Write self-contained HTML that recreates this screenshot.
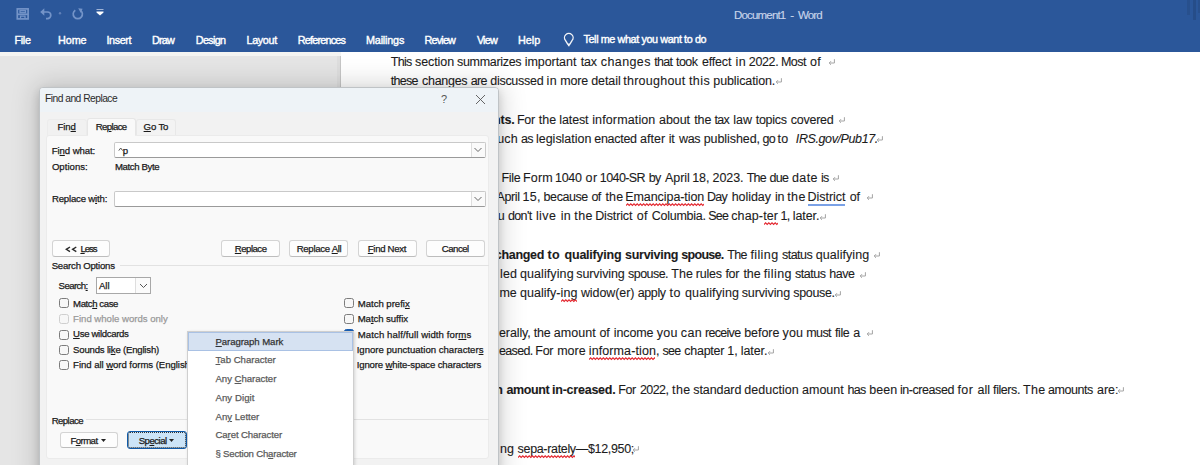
<!DOCTYPE html>
<html><head><meta charset="utf-8"><style>
*{margin:0;padding:0;box-sizing:border-box}
html,body{width:1200px;height:465px;overflow:hidden;background:#e5e5e5;font-family:"Liberation Sans",sans-serif}
.t{position:absolute;white-space:nowrap;-webkit-text-stroke:0.25px currentColor}
.abs{position:absolute}
#ribbon{position:absolute;left:0;top:0;width:1200px;height:52px;background:#2b579a}
#page{position:absolute;left:341px;top:52px;width:859px;height:413px;background:#fff}
.retw{position:absolute;width:8px;height:7px}
.ret{display:block}
.sq{}
.bl{border-bottom:2px solid #7aa1e6;padding-bottom:0px}
#dlg{position:absolute;left:38.5px;top:86.5px;width:460px;height:400px;background:#f2f2f2;border:1px solid #bfc3c6;border-radius:4px;box-shadow:0 0 26px 3px rgba(0,0,0,0.17),0 4px 9px rgba(0,0,0,0.14)}
#dlgtitle{position:absolute;left:39.5px;top:87.5px;width:458px;height:24.5px;background:#eef3f7;border-radius:3px 3px 0 0}
#panel{position:absolute;left:46px;top:135px;width:443px;height:324px;background:#f9f9f9;border:1px solid #ebebeb;border-radius:3px}
.tab{position:absolute;background:#f3f3f3;border:1px solid #e8e8e8;border-bottom:none;border-radius:3px 3px 0 0}
.inp{position:absolute;background:#fff;border:1px solid #c9c9c9;border-bottom-color:#9a9a9a;border-radius:2px}
.ddb{position:absolute;top:0;right:0;width:14px;height:100%;border-left:1px solid #dedede;background:#fafafa}
.btn{position:absolute;background:#fdfdfd;border:1px solid #d4d4d4;border-bottom-color:#bdbdbd;border-radius:3px}
.cb{position:absolute;width:10px;height:10px;border:1px solid #7c7c7c;border-radius:2.5px;background:#f7f7f7}
.sep{position:absolute;height:1px;background:#e2e2e2}
#menu{position:absolute;left:187px;top:331px;width:167px;height:140px;background:#fff;border:1px solid #cfcfcf;box-shadow:1px 1px 3px rgba(0,0,0,0.15)}
#mhl{position:absolute;left:188px;top:332px;width:165px;height:19px;background:#d6e2f2;border:1px solid #a9c1e4}
u{text-decoration:underline;text-underline-offset:1px;text-decoration-thickness:1px}
</style></head><body>
<div id="ribbon"></div>
<svg class="abs" style="left:0;top:0" width="130" height="26">
 <g fill="none" stroke="#7494c8" stroke-width="1.7">
  <rect x="17.3" y="8.9" width="10.8" height="10"/>
  <path d="M17.5 14.3H28"/>
  <rect x="20" y="10.7" width="5.5" height="2" stroke-width="1.3"/>
  <path d="M20.5 18.5V16.2H25V18.5" stroke-width="1.3"/>
  <path d="M42 12H47.5A3.3 3.3 0 0 1 47.5 18.6H46"/>
  <path d="M75.3 10.2A4.6 4.6 0 1 0 80.3 10.2"/>
 </g>
 <path d="M44.3 8.3L40.2 12L44.3 15.7Z" fill="#7494c8"/>
 <path d="M78.2 8.3L82.6 8.8L80.8 13Z" fill="#7494c8"/>
 <circle cx="60" cy="13.2" r="1.2" fill="#5f80b8"/>
 <rect x="96.5" y="9" width="7" height="1" fill="#9fb3d6"/>
 <path d="M96.5 11.5H103.5V12.5L100 15.6L96.5 12.5Z" fill="#fff"/>
</svg>
<svg class="abs" style="left:561px;top:32px" width="14" height="16" viewBox="0 0 14 16"><path d="M4.6 8.6A4.3 4.3 0 1 1 11 8.6L8.9 12.2H6.7Z M6.9 13.6H8.7" fill="none" stroke="#f2f4f8" stroke-width="1.35" stroke-linejoin="round"/></svg>
<div class="abs" style="left:1186.5px;top:0;width:3px;height:15px;background:#28508d;filter:blur(0.6px)"></div>
<div class="abs" style="left:1192.5px;top:0;width:3px;height:20px;background:#264d89;filter:blur(0.6px)"></div>
<div class="abs" style="left:1197.5px;top:0;width:3px;height:13px;background:#28508d;filter:blur(0.6px)"></div>
<div class="t" id="rb_title" style="left:734.00px;top:10px;font-size:11.5px;line-height:11.5px;color:#c8d4ea;letter-spacing:-0.824px;-webkit-text-stroke:0.15px #c8d4ea;">Document1&nbsp;&nbsp;-&nbsp;&nbsp;Word</div>
<div class="t" id="rb_file" style="left:14.50px;top:35px;font-size:10.8px;line-height:10.8px;color:#ffffff;letter-spacing:-0.333px;-webkit-text-stroke:0.4px #fff;">File</div>
<div class="t" id="rb_home" style="left:58.10px;top:35px;font-size:10.8px;line-height:10.8px;color:#ffffff;letter-spacing:-0.133px;-webkit-text-stroke:0.4px #fff;">Home</div>
<div class="t" id="rb_insert" style="left:106.50px;top:35px;font-size:10.8px;line-height:10.8px;color:#ffffff;letter-spacing:-0.400px;-webkit-text-stroke:0.4px #fff;">Insert</div>
<div class="t" id="rb_draw" style="left:152.00px;top:35px;font-size:10.8px;line-height:10.8px;color:#ffffff;letter-spacing:-0.833px;-webkit-text-stroke:0.4px #fff;">Draw</div>
<div class="t" id="rb_design" style="left:195.75px;top:35px;font-size:10.8px;line-height:10.8px;color:#ffffff;letter-spacing:-0.650px;-webkit-text-stroke:0.4px #fff;">Design</div>
<div class="t" id="rb_layout" style="left:246.50px;top:35px;font-size:10.8px;line-height:10.8px;color:#ffffff;letter-spacing:-0.350px;-webkit-text-stroke:0.4px #fff;">Layout</div>
<div class="t" id="rb_refs" style="left:297.75px;top:35px;font-size:10.8px;line-height:10.8px;color:#ffffff;letter-spacing:-0.789px;-webkit-text-stroke:0.4px #fff;">References</div>
<div class="t" id="rb_mail" style="left:366.00px;top:35px;font-size:10.8px;line-height:10.8px;color:#ffffff;letter-spacing:-0.186px;-webkit-text-stroke:0.4px #fff;">Mailings</div>
<div class="t" id="rb_review" style="left:424.50px;top:35px;font-size:10.8px;line-height:10.8px;color:#ffffff;letter-spacing:-0.800px;-webkit-text-stroke:0.4px #fff;">Review</div>
<div class="t" id="rb_view" style="left:476.90px;top:35px;font-size:10.8px;line-height:10.8px;color:#ffffff;letter-spacing:-0.800px;-webkit-text-stroke:0.4px #fff;">View</div>
<div class="t" id="rb_help" style="left:518.00px;top:35px;font-size:10.8px;line-height:10.8px;color:#ffffff;-webkit-text-stroke:0.4px #fff;">Help</div>
<div class="t" id="rb_tell" style="left:583.50px;top:34px;font-size:10.8px;line-height:10.8px;color:#ffffff;letter-spacing:-0.392px;-webkit-text-stroke:0.4px #fff;">Tell me what you want to do</div>
<div id="page"></div>
<div class="abs" style="left:0;top:52px;width:341px;height:3.5px;background:#f4f4f2"></div>
<div class="abs" style="left:337px;top:55.5px;width:3px;height:411px;background:#dedede"></div>
<div class="abs" style="left:340px;top:55.5px;width:1px;height:411px;background:#c6c6c6"></div>
<div class="t" id="doc_l1_w0" style="left:390.80px;top:56px;font-size:12.5px;line-height:12.5px;color:#1c1c1c;letter-spacing:-0.700px;-webkit-text-stroke:0.1px currentColor;">This</div>
<div class="t" id="doc_l1_w1" style="left:415.00px;top:56px;font-size:12.5px;line-height:12.5px;color:#1c1c1c;letter-spacing:-0.083px;-webkit-text-stroke:0.1px currentColor;">section</div>
<div class="t" id="doc_l1_w2" style="left:457.00px;top:56px;font-size:12.5px;line-height:12.5px;color:#1c1c1c;letter-spacing:-0.311px;-webkit-text-stroke:0.1px currentColor;">summarizes</div>
<div class="t" id="doc_l1_w3" style="left:524.70px;top:56px;font-size:12.5px;line-height:12.5px;color:#1c1c1c;letter-spacing:-0.050px;-webkit-text-stroke:0.1px currentColor;">important</div>
<div class="t" id="doc_l1_w4" style="left:580.80px;top:56px;font-size:12.5px;line-height:12.5px;color:#1c1c1c;letter-spacing:-0.250px;-webkit-text-stroke:0.1px currentColor;">tax</div>
<div class="t" id="doc_l1_w5" style="left:600.80px;top:56px;font-size:12.5px;line-height:12.5px;color:#1c1c1c;letter-spacing:0.400px;-webkit-text-stroke:0.1px currentColor;">changes</div>
<div class="t" id="doc_l1_w6" style="left:654.20px;top:56px;font-size:12.5px;line-height:12.5px;color:#1c1c1c;letter-spacing:-0.700px;-webkit-text-stroke:0.1px currentColor;">that</div>
<div class="t" id="doc_l1_w7" style="left:676.00px;top:56px;font-size:12.5px;line-height:12.5px;color:#1c1c1c;letter-spacing:-0.533px;-webkit-text-stroke:0.1px currentColor;">took</div>
<div class="t" id="doc_l1_w8" style="left:701.90px;top:56px;font-size:12.5px;line-height:12.5px;color:#1c1c1c;letter-spacing:-0.160px;-webkit-text-stroke:0.1px currentColor;">effect</div>
<div class="t" id="doc_l1_w9" style="left:735.60px;top:56px;font-size:12.5px;line-height:12.5px;color:#1c1c1c;letter-spacing:0.400px;-webkit-text-stroke:0.1px currentColor;">in</div>
<div class="t" id="doc_l1_w10" style="left:748.80px;top:56px;font-size:12.5px;line-height:12.5px;color:#1c1c1c;letter-spacing:-0.350px;-webkit-text-stroke:0.1px currentColor;">2022.</div>
<div class="t" id="doc_l1_w11" style="left:780.90px;top:56px;font-size:12.5px;line-height:12.5px;color:#1c1c1c;letter-spacing:-0.467px;-webkit-text-stroke:0.1px currentColor;">Most</div>
<div class="t" id="doc_l1_w12" style="left:810.00px;top:56px;font-size:12.5px;line-height:12.5px;color:#1c1c1c;letter-spacing:0.400px;-webkit-text-stroke:0.1px currentColor;">of</div>
<div class="t" id="doc_l2_w0" style="left:390.80px;top:75px;font-size:12.5px;line-height:12.5px;color:#1c1c1c;letter-spacing:-0.700px;-webkit-text-stroke:0.1px currentColor;">these</div>
<div class="t" id="doc_l2_w1" style="left:422.00px;top:75px;font-size:12.5px;line-height:12.5px;color:#1c1c1c;letter-spacing:-0.283px;-webkit-text-stroke:0.1px currentColor;">changes</div>
<div class="t" id="doc_l2_w2" style="left:470.80px;top:75px;font-size:12.5px;line-height:12.5px;color:#1c1c1c;letter-spacing:-0.700px;-webkit-text-stroke:0.1px currentColor;">are</div>
<div class="t" id="doc_l2_w3" style="left:490.30px;top:75px;font-size:12.5px;line-height:12.5px;color:#1c1c1c;letter-spacing:-0.288px;-webkit-text-stroke:0.1px currentColor;">discussed</div>
<div class="t" id="doc_l2_w4" style="left:546.50px;top:75px;font-size:12.5px;line-height:12.5px;color:#1c1c1c;letter-spacing:0.400px;-webkit-text-stroke:0.1px currentColor;">in</div>
<div class="t" id="doc_l2_w5" style="left:560.20px;top:75px;font-size:12.5px;line-height:12.5px;color:#1c1c1c;letter-spacing:-0.150px;-webkit-text-stroke:0.1px currentColor;">more</div>
<div class="t" id="doc_l2_w6" style="left:591.25px;top:75px;font-size:12.5px;line-height:12.5px;color:#1c1c1c;letter-spacing:-0.090px;-webkit-text-stroke:0.1px currentColor;">detail</div>
<div class="t" id="doc_l2_w7" style="left:623.30px;top:75px;font-size:12.5px;line-height:12.5px;color:#1c1c1c;letter-spacing:0.244px;-webkit-text-stroke:0.1px currentColor;">throughout</div>
<div class="t" id="doc_l2_w8" style="left:689.00px;top:75px;font-size:12.5px;line-height:12.5px;color:#1c1c1c;letter-spacing:0.400px;-webkit-text-stroke:0.1px currentColor;">this</div>
<div class="t" id="doc_l2_w9" style="left:713.30px;top:75px;font-size:12.5px;line-height:12.5px;color:#1c1c1c;letter-spacing:-0.109px;-webkit-text-stroke:0.1px currentColor;">publication.</div>
<div class="t" id="doc_l3_w0" style="left:493.00px;top:114px;font-size:12.5px;line-height:12.5px;color:#1c1c1c;font-weight:bold;letter-spacing:-0.200px;-webkit-text-stroke:0.1px currentColor;">nts.</div>
<div class="t" id="doc_l3_w1" style="left:516.90px;top:114px;font-size:12.5px;line-height:12.5px;color:#1c1c1c;letter-spacing:-0.300px;-webkit-text-stroke:0.1px currentColor;">For</div>
<div class="t" id="doc_l3_w2" style="left:538.80px;top:114px;font-size:12.5px;line-height:12.5px;color:#1c1c1c;-webkit-text-stroke:0.1px currentColor;">the</div>
<div class="t" id="doc_l3_w3" style="left:559.30px;top:114px;font-size:12.5px;line-height:12.5px;color:#1c1c1c;letter-spacing:-0.120px;-webkit-text-stroke:0.1px currentColor;">latest</div>
<div class="t" id="doc_l3_w4" style="left:592.20px;top:114px;font-size:12.5px;line-height:12.5px;color:#1c1c1c;letter-spacing:0.130px;-webkit-text-stroke:0.1px currentColor;">information</div>
<div class="t" id="doc_l3_w5" style="left:659.00px;top:114px;font-size:12.5px;line-height:12.5px;color:#1c1c1c;letter-spacing:-0.075px;-webkit-text-stroke:0.1px currentColor;">about</div>
<div class="t" id="doc_l3_w6" style="left:694.20px;top:114px;font-size:12.5px;line-height:12.5px;color:#1c1c1c;letter-spacing:-0.050px;-webkit-text-stroke:0.1px currentColor;">the</div>
<div class="t" id="doc_l3_w7" style="left:714.60px;top:114px;font-size:12.5px;line-height:12.5px;color:#1c1c1c;letter-spacing:-0.700px;-webkit-text-stroke:0.1px currentColor;">tax</div>
<div class="t" id="doc_l3_w8" style="left:733.30px;top:114px;font-size:12.5px;line-height:12.5px;color:#1c1c1c;-webkit-text-stroke:0.1px currentColor;">law</div>
<div class="t" id="doc_l3_w9" style="left:755.80px;top:114px;font-size:12.5px;line-height:12.5px;color:#1c1c1c;letter-spacing:-0.300px;-webkit-text-stroke:0.1px currentColor;">topics</div>
<div class="t" id="doc_l3_w10" style="left:790.80px;top:114px;font-size:12.5px;line-height:12.5px;color:#1c1c1c;letter-spacing:-0.250px;-webkit-text-stroke:0.1px currentColor;">covered</div>
<div class="t" id="doc_l4_w0" style="left:497.30px;top:133px;font-size:12.5px;line-height:12.5px;color:#1c1c1c;letter-spacing:0.100px;-webkit-text-stroke:0.1px currentColor;">uch</div>
<div class="t" id="doc_l4_w1" style="left:521.00px;top:133px;font-size:12.5px;line-height:12.5px;color:#1c1c1c;letter-spacing:-0.700px;-webkit-text-stroke:0.1px currentColor;">as</div>
<div class="t" id="doc_l4_w2" style="left:536.00px;top:133px;font-size:12.5px;line-height:12.5px;color:#1c1c1c;letter-spacing:-0.020px;-webkit-text-stroke:0.1px currentColor;">legislation</div>
<div class="t" id="doc_l4_w3" style="left:594.30px;top:133px;font-size:12.5px;line-height:12.5px;color:#1c1c1c;letter-spacing:-0.300px;-webkit-text-stroke:0.1px currentColor;">enacted</div>
<div class="t" id="doc_l4_w4" style="left:640.00px;top:133px;font-size:12.5px;line-height:12.5px;color:#1c1c1c;letter-spacing:0.062px;-webkit-text-stroke:0.1px currentColor;">after</div>
<div class="t" id="doc_l4_w5" style="left:668.75px;top:133px;font-size:12.5px;line-height:12.5px;color:#1c1c1c;letter-spacing:-0.250px;-webkit-text-stroke:0.1px currentColor;">it</div>
<div class="t" id="doc_l4_w6" style="left:679.00px;top:133px;font-size:12.5px;line-height:12.5px;color:#1c1c1c;letter-spacing:-0.375px;-webkit-text-stroke:0.1px currentColor;">was</div>
<div class="t" id="doc_l4_w7" style="left:703.75px;top:133px;font-size:12.5px;line-height:12.5px;color:#1c1c1c;letter-spacing:-0.083px;-webkit-text-stroke:0.1px currentColor;">published,</div>
<div class="t" id="doc_l4_w8" style="left:762.50px;top:133px;font-size:12.5px;line-height:12.5px;color:#1c1c1c;letter-spacing:-0.700px;-webkit-text-stroke:0.1px currentColor;">go</div>
<div class="t" id="doc_l4_w9" style="left:777.50px;top:133px;font-size:12.5px;line-height:12.5px;color:#1c1c1c;letter-spacing:0.400px;-webkit-text-stroke:0.1px currentColor;">to</div>
<div class="t" id="doc_l4_w10" style="left:795.80px;top:133px;font-size:12.5px;line-height:12.5px;color:#1c1c1c;letter-spacing:-0.392px;-webkit-text-stroke:0.1px currentColor;"><i>IRS.gov/Pub17.</i></div>
<div class="t" id="doc_l5_w0" style="left:501.50px;top:172px;font-size:12.5px;line-height:12.5px;color:#1c1c1c;letter-spacing:-0.333px;-webkit-text-stroke:0.1px currentColor;">File</div>
<div class="t" id="doc_l5_w1" style="left:523.00px;top:172px;font-size:12.5px;line-height:12.5px;color:#1c1c1c;letter-spacing:0.167px;-webkit-text-stroke:0.1px currentColor;">Form</div>
<div class="t" id="doc_l5_w2" style="left:555.00px;top:172px;font-size:12.5px;line-height:12.5px;color:#1c1c1c;letter-spacing:-0.300px;-webkit-text-stroke:0.1px currentColor;">1040</div>
<div class="t" id="doc_l5_w3" style="left:585.60px;top:172px;font-size:12.5px;line-height:12.5px;color:#1c1c1c;letter-spacing:0.400px;-webkit-text-stroke:0.1px currentColor;">or</div>
<div class="t" id="doc_l5_w4" style="left:599.80px;top:172px;font-size:12.5px;line-height:12.5px;color:#1c1c1c;letter-spacing:-0.592px;-webkit-text-stroke:0.1px currentColor;">1040-SR</div>
<div class="t" id="doc_l5_w5" style="left:648.75px;top:172px;font-size:12.5px;line-height:12.5px;color:#1c1c1c;letter-spacing:-0.700px;-webkit-text-stroke:0.1px currentColor;">by</div>
<div class="t" id="doc_l5_w6" style="left:665.00px;top:172px;font-size:12.5px;line-height:12.5px;color:#1c1c1c;letter-spacing:-0.050px;-webkit-text-stroke:0.1px currentColor;">April</div>
<div class="t" id="doc_l5_w7" style="left:692.30px;top:172px;font-size:12.5px;line-height:12.5px;color:#1c1c1c;letter-spacing:-0.150px;-webkit-text-stroke:0.1px currentColor;">18,</div>
<div class="t" id="doc_l5_w8" style="left:712.50px;top:172px;font-size:12.5px;line-height:12.5px;color:#1c1c1c;letter-spacing:-0.075px;-webkit-text-stroke:0.1px currentColor;">2023.</div>
<div class="t" id="doc_l5_w9" style="left:746.70px;top:172px;font-size:12.5px;line-height:12.5px;color:#1c1c1c;letter-spacing:-0.700px;-webkit-text-stroke:0.1px currentColor;">The</div>
<div class="t" id="doc_l5_w10" style="left:769.50px;top:172px;font-size:12.5px;line-height:12.5px;color:#1c1c1c;letter-spacing:-0.700px;-webkit-text-stroke:0.1px currentColor;">due</div>
<div class="t" id="doc_l5_w11" style="left:792.00px;top:172px;font-size:12.5px;line-height:12.5px;color:#1c1c1c;letter-spacing:0.400px;-webkit-text-stroke:0.1px currentColor;">date</div>
<div class="t" id="doc_l5_w12" style="left:820.90px;top:172px;font-size:12.5px;line-height:12.5px;color:#1c1c1c;letter-spacing:-0.700px;-webkit-text-stroke:0.1px currentColor;">is</div>
<div class="t" id="doc_l6_w0" style="left:496.50px;top:191px;font-size:12.5px;line-height:12.5px;color:#1c1c1c;letter-spacing:-0.400px;-webkit-text-stroke:0.1px currentColor;">April</div>
<div class="t" id="doc_l6_w1" style="left:522.40px;top:191px;font-size:12.5px;line-height:12.5px;color:#1c1c1c;letter-spacing:0.350px;-webkit-text-stroke:0.1px currentColor;">15,</div>
<div class="t" id="doc_l6_w2" style="left:543.60px;top:191px;font-size:12.5px;line-height:12.5px;color:#1c1c1c;letter-spacing:-0.433px;-webkit-text-stroke:0.1px currentColor;">because</div>
<div class="t" id="doc_l6_w3" style="left:591.50px;top:191px;font-size:12.5px;line-height:12.5px;color:#1c1c1c;letter-spacing:-0.600px;-webkit-text-stroke:0.1px currentColor;">of</div>
<div class="t" id="doc_l6_w4" style="left:605.40px;top:191px;font-size:12.5px;line-height:12.5px;color:#1c1c1c;letter-spacing:0.175px;-webkit-text-stroke:0.1px currentColor;">the</div>
<div class="t" id="doc_l6_w5" style="left:625.25px;top:191px;font-size:12.5px;line-height:12.5px;color:#1c1c1c;letter-spacing:-0.071px;-webkit-text-stroke:0.1px currentColor;"><span class="sq">Emancipa-tion</span></div>
<div class="t" id="doc_l6_w6" style="left:706.90px;top:191px;font-size:12.5px;line-height:12.5px;color:#1c1c1c;letter-spacing:-0.700px;-webkit-text-stroke:0.1px currentColor;">Day</div>
<div class="t" id="doc_l6_w7" style="left:731.70px;top:191px;font-size:12.5px;line-height:12.5px;color:#1c1c1c;letter-spacing:-0.050px;-webkit-text-stroke:0.1px currentColor;">holiday</div>
<div class="t" id="doc_l6_w8" style="left:774.90px;top:191px;font-size:12.5px;line-height:12.5px;color:#1c1c1c;letter-spacing:-0.200px;-webkit-text-stroke:0.1px currentColor;">in</div>
<div class="t" id="doc_l6_w9" style="left:787.20px;top:191px;font-size:12.5px;line-height:12.5px;color:#1c1c1c;letter-spacing:0.400px;-webkit-text-stroke:0.1px currentColor;">the</div>
<div class="t" id="doc_l6_w10" style="left:807.60px;top:191px;font-size:12.5px;line-height:12.5px;color:#1c1c1c;letter-spacing:-0.057px;-webkit-text-stroke:0.1px currentColor;"><span class="bl">District</span></div>
<div class="t" id="doc_l6_w11" style="left:849.70px;top:191px;font-size:12.5px;line-height:12.5px;color:#1c1c1c;letter-spacing:-0.200px;-webkit-text-stroke:0.1px currentColor;">of</div>
<div class="t" id="doc_l7_w0" style="left:497.70px;top:210px;font-size:12.5px;line-height:12.5px;color:#1c1c1c;letter-spacing:-0.200px;-webkit-text-stroke:0.1px currentColor;">u</div>
<div class="t" id="doc_l7_w1" style="left:508.00px;top:210px;font-size:12.5px;line-height:12.5px;color:#1c1c1c;letter-spacing:-0.650px;-webkit-text-stroke:0.1px currentColor;">don't</div>
<div class="t" id="doc_l7_w2" style="left:535.90px;top:210px;font-size:12.5px;line-height:12.5px;color:#1c1c1c;letter-spacing:0.400px;-webkit-text-stroke:0.1px currentColor;">live</div>
<div class="t" id="doc_l7_w3" style="left:560.70px;top:210px;font-size:12.5px;line-height:12.5px;color:#1c1c1c;letter-spacing:0.400px;-webkit-text-stroke:0.1px currentColor;">in</div>
<div class="t" id="doc_l7_w4" style="left:574.30px;top:210px;font-size:12.5px;line-height:12.5px;color:#1c1c1c;letter-spacing:0.400px;-webkit-text-stroke:0.1px currentColor;">the</div>
<div class="t" id="doc_l7_w5" style="left:595.20px;top:210px;font-size:12.5px;line-height:12.5px;color:#1c1c1c;letter-spacing:-0.143px;-webkit-text-stroke:0.1px currentColor;">District</div>
<div class="t" id="doc_l7_w6" style="left:636.70px;top:210px;font-size:12.5px;line-height:12.5px;color:#1c1c1c;letter-spacing:0.400px;-webkit-text-stroke:0.1px currentColor;">of</div>
<div class="t" id="doc_l7_w7" style="left:651.70px;top:210px;font-size:12.5px;line-height:12.5px;color:#1c1c1c;letter-spacing:-0.250px;-webkit-text-stroke:0.1px currentColor;">Columbia.</div>
<div class="t" id="doc_l7_w8" style="left:708.20px;top:210px;font-size:12.5px;line-height:12.5px;color:#1c1c1c;letter-spacing:-0.700px;-webkit-text-stroke:0.1px currentColor;">See</div>
<div class="t" id="doc_l7_w9" style="left:731.25px;top:210px;font-size:12.5px;line-height:12.5px;color:#1c1c1c;letter-spacing:0.121px;-webkit-text-stroke:0.1px currentColor;">chap-<span class="sq">ter</span></div>
<div class="t" id="doc_l7_w10" style="left:780.60px;top:210px;font-size:12.5px;line-height:12.5px;color:#1c1c1c;letter-spacing:-0.700px;-webkit-text-stroke:0.1px currentColor;">1,</div>
<div class="t" id="doc_l7_w11" style="left:792.70px;top:210px;font-size:12.5px;line-height:12.5px;color:#1c1c1c;letter-spacing:-0.060px;-webkit-text-stroke:0.1px currentColor;">later.</div>
<div class="t" id="doc_l8_w0" style="left:494.80px;top:249px;font-size:12.5px;line-height:12.5px;color:#1c1c1c;font-weight:bold;letter-spacing:-0.317px;-webkit-text-stroke:0.1px currentColor;">changed</div>
<div class="t" id="doc_l8_w1" style="left:547.40px;top:249px;font-size:12.5px;line-height:12.5px;color:#1c1c1c;font-weight:bold;letter-spacing:0.400px;-webkit-text-stroke:0.1px currentColor;">to</div>
<div class="t" id="doc_l8_w2" style="left:564.60px;top:249px;font-size:12.5px;line-height:12.5px;color:#1c1c1c;font-weight:bold;letter-spacing:-0.233px;-webkit-text-stroke:0.1px currentColor;">qualifying</div>
<div class="t" id="doc_l8_w3" style="left:625.00px;top:249px;font-size:12.5px;line-height:12.5px;color:#1c1c1c;font-weight:bold;letter-spacing:-0.275px;-webkit-text-stroke:0.1px currentColor;">surviving</div>
<div class="t" id="doc_l8_w4" style="left:681.30px;top:249px;font-size:12.5px;line-height:12.5px;color:#1c1c1c;font-weight:bold;letter-spacing:-0.700px;-webkit-text-stroke:0.1px currentColor;">spouse.</div>
<div class="t" id="doc_l8_w5" style="left:727.20px;top:249px;font-size:12.5px;line-height:12.5px;color:#1c1c1c;letter-spacing:-0.650px;-webkit-text-stroke:0.1px currentColor;">The</div>
<div class="t" id="doc_l8_w6" style="left:750.40px;top:249px;font-size:12.5px;line-height:12.5px;color:#1c1c1c;letter-spacing:0.400px;-webkit-text-stroke:0.1px currentColor;">filing</div>
<div class="t" id="doc_l8_w7" style="left:782.00px;top:249px;font-size:12.5px;line-height:12.5px;color:#1c1c1c;letter-spacing:-0.540px;-webkit-text-stroke:0.1px currentColor;">status</div>
<div class="t" id="doc_l8_w8" style="left:815.80px;top:249px;font-size:12.5px;line-height:12.5px;color:#1c1c1c;letter-spacing:0.056px;-webkit-text-stroke:0.1px currentColor;">qualifying</div>
<div class="t" id="doc_l9_w0" style="left:500.10px;top:268px;font-size:12.5px;line-height:12.5px;color:#1c1c1c;letter-spacing:0.150px;-webkit-text-stroke:0.1px currentColor;">led</div>
<div class="t" id="doc_l9_w1" style="left:519.90px;top:268px;font-size:12.5px;line-height:12.5px;color:#1c1c1c;letter-spacing:0.100px;-webkit-text-stroke:0.1px currentColor;">qualifying</div>
<div class="t" id="doc_l9_w2" style="left:576.30px;top:268px;font-size:12.5px;line-height:12.5px;color:#1c1c1c;letter-spacing:-0.100px;-webkit-text-stroke:0.1px currentColor;">surviving</div>
<div class="t" id="doc_l9_w3" style="left:628.00px;top:268px;font-size:12.5px;line-height:12.5px;color:#1c1c1c;letter-spacing:-0.533px;-webkit-text-stroke:0.1px currentColor;">spouse.</div>
<div class="t" id="doc_l9_w4" style="left:671.30px;top:268px;font-size:12.5px;line-height:12.5px;color:#1c1c1c;-webkit-text-stroke:0.1px currentColor;">The</div>
<div class="t" id="doc_l9_w5" style="left:695.80px;top:268px;font-size:12.5px;line-height:12.5px;color:#1c1c1c;letter-spacing:-0.225px;-webkit-text-stroke:0.1px currentColor;">rules</div>
<div class="t" id="doc_l9_w6" style="left:725.40px;top:268px;font-size:12.5px;line-height:12.5px;color:#1c1c1c;letter-spacing:-0.250px;-webkit-text-stroke:0.1px currentColor;">for</div>
<div class="t" id="doc_l9_w7" style="left:743.40px;top:268px;font-size:12.5px;line-height:12.5px;color:#1c1c1c;letter-spacing:-0.075px;-webkit-text-stroke:0.1px currentColor;">the</div>
<div class="t" id="doc_l9_w8" style="left:763.75px;top:268px;font-size:12.5px;line-height:12.5px;color:#1c1c1c;letter-spacing:0.400px;-webkit-text-stroke:0.1px currentColor;">filing</div>
<div class="t" id="doc_l9_w9" style="left:795.00px;top:268px;font-size:12.5px;line-height:12.5px;color:#1c1c1c;letter-spacing:-0.460px;-webkit-text-stroke:0.1px currentColor;">status</div>
<div class="t" id="doc_l9_w10" style="left:829.20px;top:268px;font-size:12.5px;line-height:12.5px;color:#1c1c1c;letter-spacing:-0.433px;-webkit-text-stroke:0.1px currentColor;">have</div>
<div class="t" id="doc_l10_w0" style="left:499.60px;top:287px;font-size:12.5px;line-height:12.5px;color:#1c1c1c;letter-spacing:-0.200px;-webkit-text-stroke:0.1px currentColor;">me</div>
<div class="t" id="doc_l10_w1" style="left:519.90px;top:287px;font-size:12.5px;line-height:12.5px;color:#1c1c1c;letter-spacing:0.050px;-webkit-text-stroke:0.1px currentColor;">qualify-<span class="sq">ing</span></div>
<div class="t" id="doc_l10_w2" style="left:580.90px;top:287px;font-size:12.5px;line-height:12.5px;color:#1c1c1c;letter-spacing:-0.075px;-webkit-text-stroke:0.1px currentColor;">widow(er)</div>
<div class="t" id="doc_l10_w3" style="left:637.80px;top:287px;font-size:12.5px;line-height:12.5px;color:#1c1c1c;letter-spacing:-0.425px;-webkit-text-stroke:0.1px currentColor;">apply</div>
<div class="t" id="doc_l10_w4" style="left:669.60px;top:287px;font-size:12.5px;line-height:12.5px;color:#1c1c1c;letter-spacing:0.400px;-webkit-text-stroke:0.1px currentColor;">to</div>
<div class="t" id="doc_l10_w5" style="left:685.00px;top:287px;font-size:12.5px;line-height:12.5px;color:#1c1c1c;letter-spacing:0.133px;-webkit-text-stroke:0.1px currentColor;">qualifying</div>
<div class="t" id="doc_l10_w6" style="left:741.70px;top:287px;font-size:12.5px;line-height:12.5px;color:#1c1c1c;letter-spacing:-0.113px;-webkit-text-stroke:0.1px currentColor;">surviving</div>
<div class="t" id="doc_l10_w7" style="left:793.30px;top:287px;font-size:12.5px;line-height:12.5px;color:#1c1c1c;letter-spacing:-0.333px;-webkit-text-stroke:0.1px currentColor;">spouse.</div>
<div class="t" id="doc_l11_w0" style="left:499.00px;top:327px;font-size:12.5px;line-height:12.5px;color:#1c1c1c;letter-spacing:-0.117px;-webkit-text-stroke:0.1px currentColor;">erally,</div>
<div class="t" id="doc_l11_w1" style="left:533.80px;top:327px;font-size:12.5px;line-height:12.5px;color:#1c1c1c;letter-spacing:-0.250px;-webkit-text-stroke:0.1px currentColor;">the</div>
<div class="t" id="doc_l11_w2" style="left:553.80px;top:327px;font-size:12.5px;line-height:12.5px;color:#1c1c1c;letter-spacing:0.060px;-webkit-text-stroke:0.1px currentColor;">amount</div>
<div class="t" id="doc_l11_w3" style="left:599.60px;top:327px;font-size:12.5px;line-height:12.5px;color:#1c1c1c;letter-spacing:-0.350px;-webkit-text-stroke:0.1px currentColor;">of</div>
<div class="t" id="doc_l11_w4" style="left:613.75px;top:327px;font-size:12.5px;line-height:12.5px;color:#1c1c1c;letter-spacing:-0.110px;-webkit-text-stroke:0.1px currentColor;">income</div>
<div class="t" id="doc_l11_w5" style="left:656.70px;top:327px;font-size:12.5px;line-height:12.5px;color:#1c1c1c;letter-spacing:0.300px;-webkit-text-stroke:0.1px currentColor;">you</div>
<div class="t" id="doc_l11_w6" style="left:680.80px;top:327px;font-size:12.5px;line-height:12.5px;color:#1c1c1c;letter-spacing:0.350px;-webkit-text-stroke:0.1px currentColor;">can</div>
<div class="t" id="doc_l11_w7" style="left:705.00px;top:327px;font-size:12.5px;line-height:12.5px;color:#1c1c1c;letter-spacing:-0.700px;-webkit-text-stroke:0.1px currentColor;">receive</div>
<div class="t" id="doc_l11_w8" style="left:744.20px;top:327px;font-size:12.5px;line-height:12.5px;color:#1c1c1c;letter-spacing:-0.040px;-webkit-text-stroke:0.1px currentColor;">before</div>
<div class="t" id="doc_l11_w9" style="left:782.50px;top:327px;font-size:12.5px;line-height:12.5px;color:#1c1c1c;letter-spacing:0.125px;-webkit-text-stroke:0.1px currentColor;">you</div>
<div class="t" id="doc_l11_w10" style="left:806.25px;top:327px;font-size:12.5px;line-height:12.5px;color:#1c1c1c;letter-spacing:-0.583px;-webkit-text-stroke:0.1px currentColor;">must</div>
<div class="t" id="doc_l11_w11" style="left:835.00px;top:327px;font-size:12.5px;line-height:12.5px;color:#1c1c1c;letter-spacing:-0.400px;-webkit-text-stroke:0.1px currentColor;">file</div>
<div class="t" id="doc_l11_w12" style="left:853.30px;top:327px;font-size:12.5px;line-height:12.5px;color:#1c1c1c;letter-spacing:0.400px;-webkit-text-stroke:0.1px currentColor;">a</div>
<div class="t" id="doc_l12_w0" style="left:499.00px;top:345px;font-size:12.5px;line-height:12.5px;color:#1c1c1c;letter-spacing:-0.640px;-webkit-text-stroke:0.1px currentColor;">eased.</div>
<div class="t" id="doc_l12_w1" style="left:535.30px;top:345px;font-size:12.5px;line-height:12.5px;color:#1c1c1c;letter-spacing:-0.300px;-webkit-text-stroke:0.1px currentColor;">For</div>
<div class="t" id="doc_l12_w2" style="left:557.20px;top:345px;font-size:12.5px;line-height:12.5px;color:#1c1c1c;letter-spacing:0.017px;-webkit-text-stroke:0.1px currentColor;">more</div>
<div class="t" id="doc_l12_w3" style="left:588.75px;top:345px;font-size:12.5px;line-height:12.5px;color:#1c1c1c;letter-spacing:0.104px;-webkit-text-stroke:0.1px currentColor;"><span class="sq">informa-tion</span>,</div>
<div class="t" id="doc_l12_w4" style="left:662.50px;top:345px;font-size:12.5px;line-height:12.5px;color:#1c1c1c;letter-spacing:-0.700px;-webkit-text-stroke:0.1px currentColor;">see</div>
<div class="t" id="doc_l12_w5" style="left:684.20px;top:345px;font-size:12.5px;line-height:12.5px;color:#1c1c1c;letter-spacing:-0.233px;-webkit-text-stroke:0.1px currentColor;">chapter</div>
<div class="t" id="doc_l12_w6" style="left:727.30px;top:345px;font-size:12.5px;line-height:12.5px;color:#1c1c1c;-webkit-text-stroke:0.1px currentColor;">1,</div>
<div class="t" id="doc_l12_w7" style="left:740.80px;top:345px;font-size:12.5px;line-height:12.5px;color:#1c1c1c;letter-spacing:-0.100px;-webkit-text-stroke:0.1px currentColor;">later.</div>
<div class="t" id="doc_l13_w0" style="left:495.20px;top:384px;font-size:12.5px;line-height:12.5px;color:#1c1c1c;font-weight:bold;letter-spacing:0.400px;-webkit-text-stroke:0.1px currentColor;">n</div>
<div class="t" id="doc_l13_w1" style="left:506.40px;top:384px;font-size:12.5px;line-height:12.5px;color:#1c1c1c;font-weight:bold;letter-spacing:-0.380px;-webkit-text-stroke:0.1px currentColor;">amount</div>
<div class="t" id="doc_l13_w2" style="left:552.00px;top:384px;font-size:12.5px;line-height:12.5px;color:#1c1c1c;font-weight:bold;letter-spacing:-0.230px;-webkit-text-stroke:0.1px currentColor;">in-creased.</div>
<div class="t" id="doc_l13_w3" style="left:618.20px;top:384px;font-size:12.5px;line-height:12.5px;color:#1c1c1c;letter-spacing:-0.350px;-webkit-text-stroke:0.1px currentColor;">For</div>
<div class="t" id="doc_l13_w4" style="left:640.00px;top:384px;font-size:12.5px;line-height:12.5px;color:#1c1c1c;letter-spacing:-0.600px;-webkit-text-stroke:0.1px currentColor;">2022,</div>
<div class="t" id="doc_l13_w5" style="left:672.10px;top:384px;font-size:12.5px;line-height:12.5px;color:#1c1c1c;letter-spacing:0.350px;-webkit-text-stroke:0.1px currentColor;">the</div>
<div class="t" id="doc_l13_w6" style="left:693.30px;top:384px;font-size:12.5px;line-height:12.5px;color:#1c1c1c;letter-spacing:-0.086px;-webkit-text-stroke:0.1px currentColor;">standard</div>
<div class="t" id="doc_l13_w7" style="left:744.20px;top:384px;font-size:12.5px;line-height:12.5px;color:#1c1c1c;letter-spacing:0.050px;-webkit-text-stroke:0.1px currentColor;">deduction</div>
<div class="t" id="doc_l13_w8" style="left:802.10px;top:384px;font-size:12.5px;line-height:12.5px;color:#1c1c1c;letter-spacing:-0.020px;-webkit-text-stroke:0.1px currentColor;">amount</div>
<div class="t" id="doc_l13_w9" style="left:847.50px;top:384px;font-size:12.5px;line-height:12.5px;color:#1c1c1c;letter-spacing:-0.700px;-webkit-text-stroke:0.1px currentColor;">has</div>
<div class="t" id="doc_l13_w10" style="left:869.20px;top:384px;font-size:12.5px;line-height:12.5px;color:#1c1c1c;letter-spacing:0.100px;-webkit-text-stroke:0.1px currentColor;">been</div>
<div class="t" id="doc_l13_w11" style="left:900.00px;top:384px;font-size:12.5px;line-height:12.5px;color:#1c1c1c;letter-spacing:-0.444px;-webkit-text-stroke:0.1px currentColor;">in-creased</div>
<div class="t" id="doc_l13_w12" style="left:957.50px;top:384px;font-size:12.5px;line-height:12.5px;color:#1c1c1c;letter-spacing:0.400px;-webkit-text-stroke:0.1px currentColor;">for</div>
<div class="t" id="doc_l13_w13" style="left:977.50px;top:384px;font-size:12.5px;line-height:12.5px;color:#1c1c1c;letter-spacing:0.050px;-webkit-text-stroke:0.1px currentColor;">all</div>
<div class="t" id="doc_l13_w14" style="left:993.10px;top:384px;font-size:12.5px;line-height:12.5px;color:#1c1c1c;letter-spacing:-0.433px;-webkit-text-stroke:0.1px currentColor;">filers.</div>
<div class="t" id="doc_l13_w15" style="left:1023.00px;top:384px;font-size:12.5px;line-height:12.5px;color:#1c1c1c;letter-spacing:0.300px;-webkit-text-stroke:0.1px currentColor;">The</div>
<div class="t" id="doc_l13_w16" style="left:1048.10px;top:384px;font-size:12.5px;line-height:12.5px;color:#1c1c1c;letter-spacing:-0.450px;-webkit-text-stroke:0.1px currentColor;">amounts</div>
<div class="t" id="doc_l13_w17" style="left:1096.90px;top:384px;font-size:12.5px;line-height:12.5px;color:#1c1c1c;letter-spacing:0.033px;-webkit-text-stroke:0.1px currentColor;">are:</div>
<div class="t" id="doc_l14_w0" style="left:499.90px;top:443px;font-size:12.5px;line-height:12.5px;color:#1c1c1c;letter-spacing:0.200px;-webkit-text-stroke:0.1px currentColor;">ng</div>
<div class="t" id="doc_l14_w1" style="left:517.60px;top:443px;font-size:12.5px;line-height:12.5px;color:#1c1c1c;letter-spacing:-0.332px;-webkit-text-stroke:0.1px currentColor;"><span class="sq">sepa-rately</span>—$12,950;</div>
<div class="retw" style="left:827.7px;top:59.1px"><svg class="ret" width="8" height="7" viewBox="0 0 8 7"><path d="M6.4 0.2V4H1.2M3 2.2L1.2 4L3 5.8" stroke="#a4a4a4" stroke-width="1" fill="none"/></svg></div>
<div class="retw" style="left:774.5px;top:77.8px"><svg class="ret" width="8" height="7" viewBox="0 0 8 7"><path d="M6.4 0.2V4H1.2M3 2.2L1.2 4L3 5.8" stroke="#a4a4a4" stroke-width="1" fill="none"/></svg></div>
<div class="retw" style="left:838.3px;top:117.2px"><svg class="ret" width="8" height="7" viewBox="0 0 8 7"><path d="M6.4 0.2V4H1.2M3 2.2L1.2 4L3 5.8" stroke="#a4a4a4" stroke-width="1" fill="none"/></svg></div>
<div class="retw" style="left:876.0px;top:136.0px"><svg class="ret" width="8" height="7" viewBox="0 0 8 7"><path d="M6.4 0.2V4H1.2M3 2.2L1.2 4L3 5.8" stroke="#a4a4a4" stroke-width="1" fill="none"/></svg></div>
<div class="retw" style="left:832.0px;top:175.3px"><svg class="ret" width="8" height="7" viewBox="0 0 8 7"><path d="M6.4 0.2V4H1.2M3 2.2L1.2 4L3 5.8" stroke="#a4a4a4" stroke-width="1" fill="none"/></svg></div>
<div class="retw" style="left:865.5px;top:194.2px"><svg class="ret" width="8" height="7" viewBox="0 0 8 7"><path d="M6.4 0.2V4H1.2M3 2.2L1.2 4L3 5.8" stroke="#a4a4a4" stroke-width="1" fill="none"/></svg></div>
<div class="retw" style="left:818.8px;top:213.8px"><svg class="ret" width="8" height="7" viewBox="0 0 8 7"><path d="M6.4 0.2V4H1.2M3 2.2L1.2 4L3 5.8" stroke="#a4a4a4" stroke-width="1" fill="none"/></svg></div>
<div class="retw" style="left:873.2px;top:252.4px"><svg class="ret" width="8" height="7" viewBox="0 0 8 7"><path d="M6.4 0.2V4H1.2M3 2.2L1.2 4L3 5.8" stroke="#a4a4a4" stroke-width="1" fill="none"/></svg></div>
<div class="retw" style="left:859.2px;top:271.5px"><svg class="ret" width="8" height="7" viewBox="0 0 8 7"><path d="M6.4 0.2V4H1.2M3 2.2L1.2 4L3 5.8" stroke="#a4a4a4" stroke-width="1" fill="none"/></svg></div>
<div class="retw" style="left:833.8px;top:290.8px"><svg class="ret" width="8" height="7" viewBox="0 0 8 7"><path d="M6.4 0.2V4H1.2M3 2.2L1.2 4L3 5.8" stroke="#a4a4a4" stroke-width="1" fill="none"/></svg></div>
<div class="retw" style="left:866.3px;top:330.2px"><svg class="ret" width="8" height="7" viewBox="0 0 8 7"><path d="M6.4 0.2V4H1.2M3 2.2L1.2 4L3 5.8" stroke="#a4a4a4" stroke-width="1" fill="none"/></svg></div>
<div class="retw" style="left:766.7px;top:348.8px"><svg class="ret" width="8" height="7" viewBox="0 0 8 7"><path d="M6.4 0.2V4H1.2M3 2.2L1.2 4L3 5.8" stroke="#a4a4a4" stroke-width="1" fill="none"/></svg></div>
<div class="retw" style="left:1117.3px;top:387.2px"><svg class="ret" width="8" height="7" viewBox="0 0 8 7"><path d="M6.4 0.2V4H1.2M3 2.2L1.2 4L3 5.8" stroke="#a4a4a4" stroke-width="1" fill="none"/></svg></div>
<div class="retw" style="left:632.0px;top:445.6px"><svg class="ret" width="8" height="7" viewBox="0 0 8 7"><path d="M6.4 0.2V4H1.2M3 2.2L1.2 4L3 5.8" stroke="#a4a4a4" stroke-width="1" fill="none"/></svg></div>
<svg class="abs" style="left:625.8px;top:203.0px" width="78.0" height="3.5"><path d="M0 2.5L1.6 0.8L3.2 2.5L4.8 0.8L6.4 2.5L8.0 0.8L9.6 2.5L11.2 0.8L12.8 2.5L14.4 0.8L16.0 2.5L17.6 0.8L19.2 2.5L20.8 0.8L22.4 2.5L24.0 0.8L25.6 2.5L27.2 0.8L28.8 2.5L30.4 0.8L32.0 2.5L33.6 0.8L35.2 2.5L36.8 0.8L38.4 2.5L40.0 0.8L41.6 2.5L43.2 0.8L44.8 2.5L46.4 0.8L48.0 2.5L49.6 0.8L51.2 2.5L52.8 0.8L54.4 2.5L56.0 0.8L57.6 2.5L59.2 0.8L60.8 2.5L62.4 0.8L64.0 2.5L65.6 0.8L67.2 2.5L68.8 0.8L70.4 2.5L72.0 0.8L73.6 2.5L75.2 0.8L76.8 2.5L78.4 0.8L80.0 2.5" fill="none" stroke="#e3262e" stroke-width="1.1"/></svg>
<svg class="abs" style="left:763.6px;top:222.0px" width="14.0" height="3.5"><path d="M0 2.5L1.6 0.8L3.2 2.5L4.8 0.8L6.4 2.5L8.0 0.8L9.6 2.5L11.2 0.8L12.8 2.5L14.4 0.8L16.0 2.5" fill="none" stroke="#e3262e" stroke-width="1.1"/></svg>
<svg class="abs" style="left:561.1px;top:299.0px" width="15.8" height="3.5"><path d="M0 2.5L1.6 0.8L3.2 2.5L4.8 0.8L6.4 2.5L8.0 0.8L9.6 2.5L11.2 0.8L12.8 2.5L14.4 0.8L16.0 2.5" fill="none" stroke="#e3262e" stroke-width="1.1"/></svg>
<svg class="abs" style="left:589.2px;top:357.0px" width="66.2" height="3.5"><path d="M0 2.5L1.6 0.8L3.2 2.5L4.8 0.8L6.4 2.5L8.0 0.8L9.6 2.5L11.2 0.8L12.8 2.5L14.4 0.8L16.0 2.5L17.6 0.8L19.2 2.5L20.8 0.8L22.4 2.5L24.0 0.8L25.6 2.5L27.2 0.8L28.8 2.5L30.4 0.8L32.0 2.5L33.6 0.8L35.2 2.5L36.8 0.8L38.4 2.5L40.0 0.8L41.6 2.5L43.2 0.8L44.8 2.5L46.4 0.8L48.0 2.5L49.6 0.8L51.2 2.5L52.8 0.8L54.4 2.5L56.0 0.8L57.6 2.5L59.2 0.8L60.8 2.5L62.4 0.8L64.0 2.5L65.6 0.8L67.2 2.5" fill="none" stroke="#e3262e" stroke-width="1.1"/></svg>
<svg class="abs" style="left:518.1px;top:455.0px" width="57.2" height="3.5"><path d="M0 2.5L1.6 0.8L3.2 2.5L4.8 0.8L6.4 2.5L8.0 0.8L9.6 2.5L11.2 0.8L12.8 2.5L14.4 0.8L16.0 2.5L17.6 0.8L19.2 2.5L20.8 0.8L22.4 2.5L24.0 0.8L25.6 2.5L27.2 0.8L28.8 2.5L30.4 0.8L32.0 2.5L33.6 0.8L35.2 2.5L36.8 0.8L38.4 2.5L40.0 0.8L41.6 2.5L43.2 0.8L44.8 2.5L46.4 0.8L48.0 2.5L49.6 0.8L51.2 2.5L52.8 0.8L54.4 2.5L56.0 0.8L57.6 2.5" fill="none" stroke="#e3262e" stroke-width="1.1"/></svg>
<div id="dlg"></div>
<div id="dlgtitle"></div>
<svg class="abs" style="left:474.5px;top:93.5px" width="11" height="11"><path d="M1 1L10 10M10 1L1 10" stroke="#555" stroke-width="0.9"/></svg>
<div class="tab" style="left:47px;top:119px;width:40px;height:17px;border-color:#ececec;background:#f1f1f1"></div>
<div class="tab" style="left:87px;top:118px;width:49px;height:18px;background:#f9f9f9;border-color:#e6e6e6"></div>
<div class="tab" style="left:136px;top:119px;width:40px;height:17px"></div>
<div id="panel"></div>
<div class="abs" style="left:88px;top:134px;width:47px;height:2px;background:#f9f9f9"></div>
<div class="inp" style="left:114px;top:142px;width:372px;height:16px"><div class="ddb"></div></div>
<div class="inp" style="left:114px;top:191px;width:372px;height:16px"><div class="ddb"></div></div>
<svg class="abs" style="left:474px;top:147px" width="8" height="6"><path d="M0.5 1L4 4.5L7.5 1" fill="none" stroke="#666" stroke-width="1"/></svg>
<svg class="abs" style="left:474px;top:196px" width="8" height="6"><path d="M0.5 1L4 4.5L7.5 1" fill="none" stroke="#666" stroke-width="1"/></svg>
<div class="btn" style="left:52px;top:240px;width:58px;height:17px"></div>
<div class="btn" style="left:221px;top:240px;width:59px;height:17px"></div>
<div class="btn" style="left:289px;top:240px;width:59px;height:17px"></div>
<div class="btn" style="left:358px;top:240px;width:59px;height:17px"></div>
<div class="btn" style="left:426px;top:240px;width:59px;height:17px"></div>
<div class="sep" style="left:120px;top:265px;width:369px"></div>
<div class="inp" style="left:96px;top:277px;width:55px;height:17px;border-color:#a8a8a8;border-radius:0"><div class="ddb" style="width:15px;background:#fbfbfb"></div></div>
<svg class="abs" style="left:139px;top:283px" width="9" height="6"><path d="M1 1L4.5 4.5L8 1" fill="none" stroke="#555" stroke-width="1"/></svg>
<div class="cb" style="left:58.5px;top:298px"></div>
<div class="cb" style="left:58.5px;top:314px;border-color:#cfcfcf"></div>
<div class="cb" style="left:58.5px;top:329.5px"></div>
<div class="cb" style="left:58.5px;top:345px"></div>
<div class="cb" style="left:58.5px;top:360px"></div>
<div class="cb" style="left:343.5px;top:298px"></div>
<div class="cb" style="left:343.5px;top:313.5px"></div>
<div class="cb" style="left:343.5px;top:328.5px;background:#1a5fb4;border-color:#1a5fb4"></div>
<div class="sep" style="left:86px;top:419px;width:403px"></div>
<div class="btn" style="left:60px;top:432px;width:58px;height:16px"></div>
<div class="btn" style="left:127px;top:431px;width:60px;height:18px;background:#cce4f7;border:1px solid #0f5aa8;outline:1px dotted #333;outline-offset:-2px"></div>
<svg class="abs" style="left:101px;top:439px" width="6" height="4"><path d="M0 0H5L2.5 3Z" fill="#222"/></svg>
<svg class="abs" style="left:169px;top:439px" width="6" height="4"><path d="M0 0H5L2.5 3Z" fill="#222"/></svg>
<svg class="abs" style="left:65px;top:245.5px" width="14" height="7"><path d="M5 1L1.3 3.3L5 5.6M11.3 1L7.6 3.3L11.3 5.6" fill="none" stroke="#2a2a2a" stroke-width="1.4"/></svg>
<svg class="abs" style="left:117.5px;top:147px" width="6" height="5"><path d="M0.8 3.6L2.7 1L4.6 3.6" fill="none" stroke="#555" stroke-width="1"/></svg>
<div class="t" id="dlg_title" style="left:45.00px;top:94px;font-size:10.3px;line-height:10.3px;color:#2a2a2a;letter-spacing:-0.533px;-webkit-text-stroke:0;">Find and Replace</div>
<div class="t" id="dlg_help" style="left:441.00px;top:94px;font-size:11px;line-height:11px;color:#555;letter-spacing:-1.200px;-webkit-text-stroke:0;">?</div>
<div class="t" id="dlg_tfind" style="left:57.40px;top:122px;font-size:9.6px;line-height:9.6px;color:#1a1a1a;letter-spacing:-0.050px;">Fin<u>d</u></div>
<div class="t" id="dlg_trep" style="left:95.75px;top:122px;font-size:9.6px;line-height:9.6px;color:#1a1a1a;letter-spacing:-0.625px;">Re<u>p</u>lace</div>
<div class="t" id="dlg_tgo" style="left:143.60px;top:122px;font-size:9.6px;line-height:9.6px;color:#1a1a1a;letter-spacing:-0.150px;"><u>G</u>o To</div>
<div class="t" id="dlg_fw" style="left:51.75px;top:146px;font-size:9.6px;line-height:9.6px;color:#1a1a1a;letter-spacing:-0.094px;">Fi<u>n</u>d what:</div>
<div class="t" id="dlg_fwv2" style="left:122.80px;top:146px;font-size:9.6px;line-height:9.6px;color:#1a1a1a;">p</div>
<div class="t" id="dlg_opt" style="left:51.90px;top:162px;font-size:9.6px;line-height:9.6px;color:#1a1a1a;letter-spacing:0.014px;">Options:</div>
<div class="t" id="dlg_optv" style="left:115.00px;top:162px;font-size:9.6px;line-height:9.6px;color:#1a1a1a;letter-spacing:-0.378px;">Match Byte</div>
<div class="t" id="dlg_rw" style="left:51.90px;top:194px;font-size:9.6px;line-height:9.6px;color:#1a1a1a;letter-spacing:-0.175px;">Replace w<u>i</u>th:</div>
<div class="t" id="dlg_less" style="left:80.40px;top:244px;font-size:9.6px;line-height:9.6px;color:#1a1a1a;letter-spacing:-1.067px;"><u>L</u>ess</div>
<div class="t" id="dlg_brep" style="left:234.80px;top:244px;font-size:9.6px;line-height:9.6px;color:#1a1a1a;letter-spacing:-0.500px;"><u>R</u>eplace</div>
<div class="t" id="dlg_brepall" style="left:296.70px;top:244px;font-size:9.6px;line-height:9.6px;color:#1a1a1a;letter-spacing:-0.300px;">Replace <u>A</u>ll</div>
<div class="t" id="dlg_bfind" style="left:367.80px;top:244px;font-size:9.6px;line-height:9.6px;color:#1a1a1a;letter-spacing:-0.312px;"><u>F</u>ind Next</div>
<div class="t" id="dlg_bcancel" style="left:441.80px;top:244px;font-size:9.6px;line-height:9.6px;color:#1a1a1a;letter-spacing:-0.500px;">Cancel</div>
<div class="t" id="dlg_sopt" style="left:51.70px;top:261px;font-size:9.6px;line-height:9.6px;color:#1a1a1a;letter-spacing:-0.215px;">Search Options</div>
<div class="t" id="dlg_search" style="left:58.60px;top:281px;font-size:9.6px;line-height:9.6px;color:#1a1a1a;letter-spacing:-0.567px;">Search<u>:</u></div>
<div class="t" id="dlg_all" style="left:98.90px;top:281px;font-size:9.6px;line-height:9.6px;color:#1a1a1a;letter-spacing:0.050px;">All</div>
<div class="t" id="dlg_c1" style="left:73.10px;top:299px;font-size:9.6px;line-height:9.6px;color:#1a1a1a;letter-spacing:-0.422px;">Matc<u>h</u> case</div>
<div class="t" id="dlg_c2" style="left:73.10px;top:314px;font-size:9.6px;line-height:9.6px;color:#9a9a9a;letter-spacing:-0.015px;">Find whole words only</div>
<div class="t" id="dlg_c3" style="left:73.10px;top:329px;font-size:9.6px;line-height:9.6px;color:#1a1a1a;letter-spacing:-0.333px;"><u>U</u>se wildcards</div>
<div class="t" id="dlg_c4" style="left:73.10px;top:345px;font-size:9.6px;line-height:9.6px;color:#1a1a1a;letter-spacing:-0.200px;">Sounds li<u>k</u>e (English)</div>
<div class="t" id="dlg_c5" style="left:73.10px;top:360px;font-size:9.6px;line-height:9.6px;color:#1a1a1a;letter-spacing:-0.056px;">Find all <u>w</u>ord forms (English</div>
<div class="t" id="dlg_r1" style="left:357.70px;top:299px;font-size:9.6px;line-height:9.6px;color:#1a1a1a;letter-spacing:-0.018px;">Match prefi<u>x</u></div>
<div class="t" id="dlg_r2" style="left:357.70px;top:314px;font-size:9.6px;line-height:9.6px;color:#1a1a1a;letter-spacing:-0.064px;">Ma<u>t</u>ch suffix</div>
<div class="t" id="dlg_r3" style="left:357.70px;top:330px;font-size:9.6px;line-height:9.6px;color:#1a1a1a;letter-spacing:0.100px;">Match half/full width for<u>m</u>s</div>
<div class="t" id="dlg_r4" style="left:356.70px;top:345px;font-size:9.6px;line-height:9.6px;color:#1a1a1a;letter-spacing:-0.007px;">Ignore punctuation character<u>s</u></div>
<div class="t" id="dlg_r5" style="left:356.70px;top:360px;font-size:9.6px;line-height:9.6px;color:#1a1a1a;letter-spacing:-0.143px;">Ignore <u>w</u>hite-space characters</div>
<div class="t" id="dlg_rep" style="left:51.70px;top:416px;font-size:9.6px;line-height:9.6px;color:#1a1a1a;letter-spacing:-0.567px;">Replace</div>
<div class="t" id="dlg_fmt" style="left:70.40px;top:436px;font-size:9.6px;line-height:9.6px;color:#1a1a1a;letter-spacing:-0.540px;">F<u>o</u>rmat</div>
<div class="t" id="dlg_spc" style="left:138.70px;top:436px;font-size:9.6px;line-height:9.6px;color:#1a1a1a;letter-spacing:-0.500px;">Sp<u>e</u>cial</div>
<div id="menu"></div>
<div id="mhl"></div>
<div class="t" id="menu_1" style="left:215.50px;top:337px;font-size:9.6px;line-height:9.6px;color:#333;letter-spacing:-0.077px;"><u>P</u>aragraph Mark</div>
<div class="t" id="menu_2" style="left:215.50px;top:355px;font-size:9.6px;line-height:9.6px;color:#5a5a5a;"><u>T</u>ab Character</div>
<div class="t" id="menu_3" style="left:215.50px;top:374px;font-size:9.6px;line-height:9.6px;color:#5a5a5a;letter-spacing:-0.042px;">Any <u>C</u>haracter</div>
<div class="t" id="menu_4" style="left:215.50px;top:393px;font-size:9.6px;line-height:9.6px;color:#5a5a5a;letter-spacing:0.062px;">Any Di<u>g</u>it</div>
<div class="t" id="menu_5" style="left:215.50px;top:412px;font-size:9.6px;line-height:9.6px;color:#5a5a5a;">An<u>y</u> Letter</div>
<div class="t" id="menu_6" style="left:215.50px;top:430px;font-size:9.6px;line-height:9.6px;color:#5a5a5a;letter-spacing:-0.107px;">Ca<u>r</u>et Character</div>
<div class="t" id="menu_7" style="left:215.50px;top:449px;font-size:9.6px;line-height:9.6px;color:#5a5a5a;letter-spacing:-0.194px;">§ Section Ch<u>a</u>racter</div>
</body></html>
